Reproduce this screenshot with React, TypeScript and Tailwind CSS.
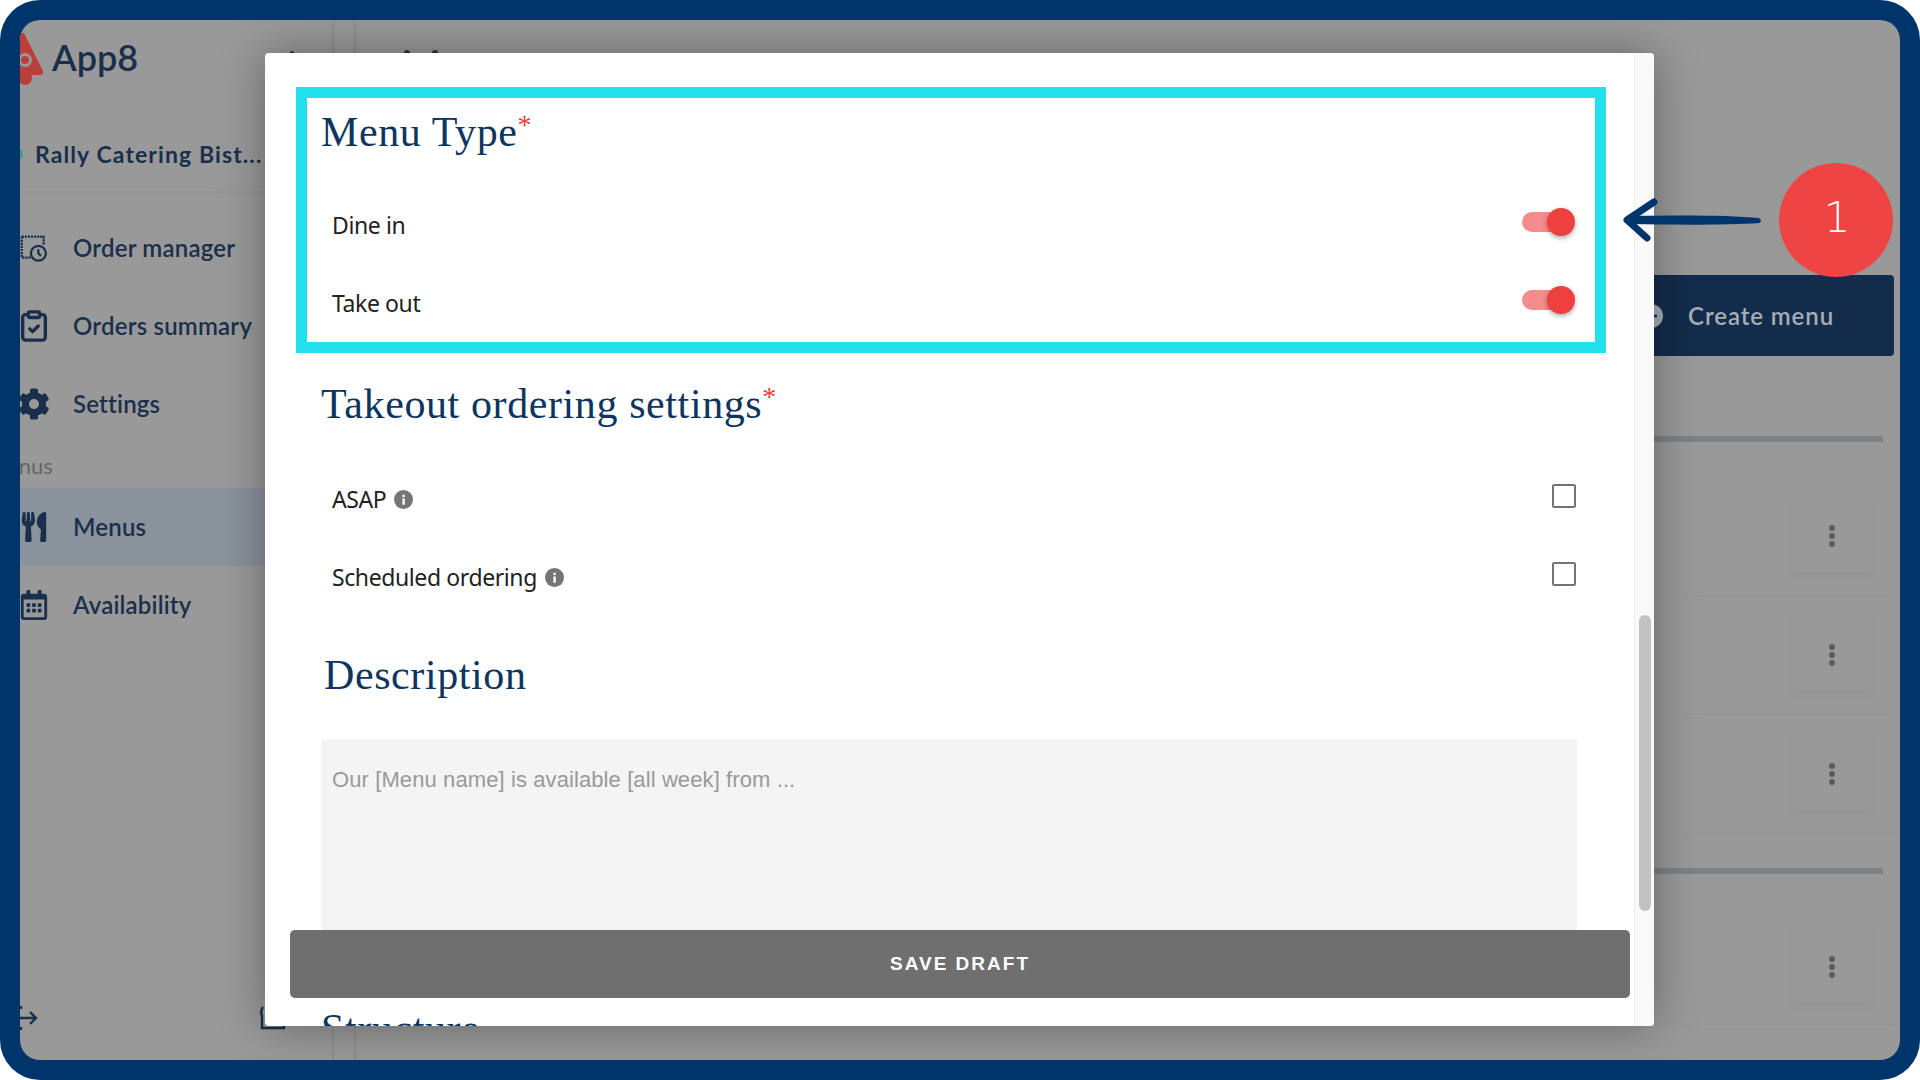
import { FaCog, FaUtensils, FaRegCalendarAlt } from "react-icons/fa";
import { ClipboardCheck } from "lucide-react";
import type { ReactNode } from "react";

const serif = "font-['Liberation_Serif',serif] text-[42px] leading-[50px] tracking-[0.6px] text-[#0d3560]";
const body = "font-['Noto_Sans',sans-serif] text-[23px] tracking-[-0.4px] text-[#222]";
const nav = "font-['Lato',sans-serif] text-[24px] font-semibold tracking-[0.2px] text-[#1a2f4b]";

function OrderIcon() {
  return (
    <svg width="32" height="32" viewBox="0 0 32 32" fill="none" stroke="#1a2f4b" strokeWidth="2.6">
      <path d="M2 3 H27 V13 M12 27 H2 V3" strokeDasharray="2.5 1" />
      <circle cx="21" cy="22" r="8.5" />
      <path d="M21 17.5 V22 L24 25" />
    </svg>
  );
}

function NavRow({ icon, label, active }: { icon: ReactNode; label: string; active?: boolean }) {
  return (
    <div className={`flex h-[78px] items-center ${active ? "bg-[#8a929c]" : ""}`}>
      <div className="flex w-[53px] shrink-0 justify-center pr-[25px] text-[#1a2f4b]">{icon}</div>
      <span className={nav}>{label}</span>
    </div>
  );
}

function Toggle() {
  return (
    <div className="relative h-[20px] w-[42px]">
      <div className="h-full w-full rounded-full bg-[#f58c8c]" />
      <div className="absolute left-[25px] top-[-4px] h-[28px] w-[28px] rounded-full bg-[#ef4040] shadow-[0_2px_5px_rgba(0,0,0,0.35)]" />
    </div>
  );
}

function InfoDot() {
  return (
    <svg width="19" height="19" viewBox="0 0 18 18">
      <circle cx="9" cy="9" r="9" fill="#757575" />
      <rect x="8" y="8" width="2.2" height="6" fill="#fff" />
      <rect x="8" y="4.5" width="2.2" height="2.2" fill="#fff" />
    </svg>
  );
}

function CheckRow({ label, info }: { label: string; info?: boolean }) {
  return (
    <div className="flex h-[78px] items-center justify-between pl-[36px] pr-[30px]">
      <div className="flex items-center gap-[8px]">
        <span className={body}>{label}</span>
        {info && <InfoDot />}
      </div>
      <div className="h-[24px] w-[24px] -translate-y-[3px] rounded-[2px] border-[2.5px] border-[#757575]" />
    </div>
  );
}

function MenuRow() {
  return (
    <div className="flex h-[119px] items-center justify-end border-b border-[#949494] pr-[22px]">
      <DotsButton />
    </div>
  );
}

function DotsButton() {
  return (
    <div className="flex h-[72px] w-[80px] flex-col items-center justify-center gap-[2px] bg-[#999999] shadow-[0_3px_5px_rgba(125,135,145,0.3)]">
      <i className="h-[6px] w-[6px] rounded-full bg-[#5c5c5c]" />
      <i className="h-[6px] w-[6px] rounded-full bg-[#5c5c5c]" />
      <i className="h-[6px] w-[6px] rounded-full bg-[#5c5c5c]" />
    </div>
  );
}

export default function App() {
  return (
    <div className="h-[1080px] w-[1920px] overflow-hidden bg-white">
      <div className="h-full w-full rounded-[40px] bg-[#00356b] p-[20px]">
        <div className="relative flex h-full w-full overflow-hidden rounded-[20px] bg-[#999999]">
          {/* sidebar, cut off on the left like the capture */}
          <aside className="flex w-[314px] shrink-0 flex-col border-r-2 border-[#8f8f8f]">
            <div className="flex h-[73px] items-center gap-[8px]">
              <svg width="24" height="56" viewBox="0 0 24 56" className="mt-[8px] shrink-0">
                <path d="M0 0 L4 0 L23 38 Q24 42 20 42 L0 42 Z" fill="#b9403a" />
                <circle cx="5" cy="27" r="7" fill="#999" />
                <circle cx="5" cy="27" r="4" fill="#b9403a" />
                <circle cx="5" cy="45" r="7" fill="#b9403a" />
              </svg>
              <span className="font-['Lato',sans-serif] text-[36px] font-semibold leading-none text-[#1a2f4b]">App8</span>
            </div>
            <div className="flex h-[101px] items-center border-b-[3px] border-[#8e949a] pt-[24px]">
              <i className="mr-[12px] h-[10px] w-[3px] rounded-r-full bg-[#4f9a8a]" />
              <span className="font-['Lato',sans-serif] text-[23px] font-bold tracking-[1.1px] text-[#1a2f4b]">Rally Catering Bist...</span>
            </div>
            <div className="pt-[15px]">
              <NavRow icon={<OrderIcon />} label="Order manager" />
              <NavRow icon={<ClipboardCheck size={34} strokeWidth={2.4} className="shrink-0" />} label="Orders summary" />
              <NavRow icon={<FaCog size={32} className="shrink-0" />} label="Settings" />
              <div className="flex h-[45px] items-center overflow-hidden">
                <span className="-ml-[33px] font-['Lato',sans-serif] text-[22px] text-[#666]">Menus</span>
              </div>
              <NavRow icon={<FaUtensils size={30} className="shrink-0" />} label="Menus" active />
              <NavRow icon={<FaRegCalendarAlt size={30} className="shrink-0" />} label="Availability" />
            </div>
            <div className="mt-auto flex h-[84px] items-start justify-between pr-[47px] pt-[30px]">
              <svg width="18" height="24" viewBox="0 0 18 24" fill="none" stroke="#1a2f4b" strokeWidth="2.4">
                <path d="M0 12 H16 M10 6 L16 12 L10 18" />
                <path d="M1 0 V3 M1 21 V24" />
              </svg>
              <svg width="25" height="24" viewBox="0 0 25 24" fill="none" stroke="#1a2f4b" strokeWidth="2.4">
                <path d="M3 1 Q0 5 2 10 V22 H24 V19" />
              </svg>
            </div>
          </aside>

          {/* page behind the dialog */}
          <div className="w-[22px] shrink-0 border-r-2 border-[#8f8f8f]" />
          <main className="flex flex-1 flex-col items-end pr-[6px] pt-[255px]">
            <div className="flex h-[81px] w-[320px] items-center justify-end rounded-[4px] bg-[#132c4b] pr-[60px]">
              <svg width="24" height="24" viewBox="0 0 24 24" className="mr-[25px]">
                <circle cx="12" cy="12" r="12" fill="#a9b0b8" />
                <path d="M6 12 H18 M12 6 V18" stroke="#132c4b" strokeWidth="2.5" />
              </svg>
              <span className="font-['Lato',sans-serif] text-[24px] font-semibold tracking-[0.9px] text-[#a5adb5]">Create menu</span>
            </div>
            <div className="mr-[11px] mt-[80px] h-[6px] w-[500px] shrink-0 bg-[#7d8287]" />
            <div className="mt-[35px] w-full">
              <MenuRow />
              <MenuRow />
              <MenuRow />
            </div>
            <div className="mr-[11px] mt-[34px] h-[6px] w-[500px] shrink-0 bg-[#7d8287]" />
            <div className="flex h-[151px] w-full items-center justify-end border-b border-[#949494] pr-[22px] pt-[36px]">
              <DotsButton />
            </div>
          </main>

          {/* tops of the page title, just showing above the dialog */}
          <i className="absolute left-[270px] top-[31px] h-[3px] w-[4px] rounded-full bg-[#333]" />
          <i className="absolute left-[384px] top-[30px] h-[6px] w-[6px] rounded-full bg-[#333]" />
          <i className="absolute left-[412px] top-[30px] h-[6px] w-[6px] rounded-full bg-[#333]" />

          {/* modal */}
          <div className="absolute left-[245px] top-[33px] flex h-[973px] w-[1389px] overflow-hidden rounded-[4px] bg-white shadow-[0_0_45px_rgba(0,0,0,0.35)]">
            <div className="min-w-0 flex-1 pl-[31px] pr-[28px] pt-[34px]">
              <section className="h-[266px] border-[11px] border-[#22e0ec] bg-white">
                <div className="flex h-[88px] items-start pl-[14px] pt-[2px]">
                  <h2 className={serif}>Menu Type<span className="align-[12px] text-[28px] text-[#e53e3e]">*</span></h2>
                </div>
                <div className="flex h-[78px] items-center justify-between pl-[25px] pr-[31px]">
                  <span className={body}>Dine in</span>
                  <div className="-translate-y-[3px]"><Toggle /></div>
                </div>
                <div className="flex h-[78px] items-center justify-between pl-[25px] pr-[31px]">
                  <span className={body}>Take out</span>
                  <div className="-translate-y-[3px]"><Toggle /></div>
                </div>
              </section>
              <h2 className={`${serif} mt-[19px] h-[88px] pl-[25px]`}>Takeout ordering settings<span className="align-[12px] text-[28px] text-[#e53e3e]">*</span></h2>
              <CheckRow label="ASAP" info />
              <CheckRow label="Scheduled ordering" info />
              <h2 className={`${serif} mt-[34px] pl-[28px]`}>Description</h2>
              <div className="ml-[25px] mr-[29px] mt-[39px] h-[210px] rounded-[4px] bg-[#f4f4f4] px-[11px] pt-[27px]">
                <p className="font-['Liberation_Sans',sans-serif] text-[22px] leading-[28px] tracking-[0.1px] text-[#999]">Our [Menu name] is available [all week] from ...</p>
              </div>
              <h2 className={`${serif} mt-[55px] pl-[25px]`}>Structure</h2>
            </div>
            <div className="w-[20px] shrink-0 border-l border-[#eeeeee] bg-[#f9f9f9] pl-[4px] pt-[562px]">
              <div className="h-[296px] w-[12px] rounded-full bg-[#c1c1c1]" />
            </div>
            <button className="absolute left-[25px] top-[877px] h-[68px] w-[1340px] rounded-[5px] bg-[#6f6f6f] font-['Liberation_Sans',sans-serif] text-[19px] font-bold tracking-[2px] text-white">SAVE DRAFT</button>
          </div>

          {/* callout */}
          <svg width="150" height="60" viewBox="0 0 150 60" fill="none" className="absolute left-[1600px] top-[172px]">
            <path d="M8 24 C60 23 110 23 139 26 Q143 29 139 31 C110 33 60 33 8 32 Z" fill="#00356b" />
            <path d="M34 10 L7 28 L27 46" stroke="#00356b" strokeWidth="7" strokeLinecap="round" strokeLinejoin="round" />
          </svg>
          <div className="absolute left-[1759px] top-[143px] flex h-[114px] w-[114px] items-center justify-center rounded-full bg-[#ef4444] pb-[6px] pl-[2px] font-['DejaVu_Sans',sans-serif] text-[42px] font-extralight text-white">1</div>
        </div>
      </div>
    </div>
  );
}
